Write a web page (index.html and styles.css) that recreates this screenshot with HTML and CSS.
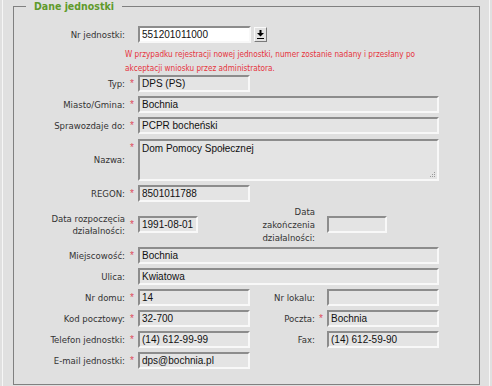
FILE: index.html
```html
<!DOCTYPE html>
<html lang="pl">
<head>
  <meta charset="UTF-8" />
  <title>Dane jednostki</title>
  <link rel="stylesheet" href="styles.css">
</head>
<body>
  <div class="panel">
    <fieldset class="ramka">
      <legend>Dane jednostki</legend>

      <div class="formularz">
        <label class="etykieta">Nr jednostki:</label>
        <span class="gwiazdka"></span>
        <div class="pole-nr">
          <input type="text" class="pole pole-biale" value="551201011000" />
          <button class="przycisk" title="Pobierz">
            <svg width="7" height="9" viewBox="0 0 7 9">
              <rect x="2.5" y="0" width="2" height="3" fill="#000" />
              <polygon points="0,3 7,3 3.5,6.5" fill="#000" />
              <rect x="0" y="8" width="7" height="1" fill="#000" />
            </svg>
          </button>
        </div>

        <p class="uwaga">W przypadku rejestracji nowej jednostki, numer zostanie nadany i przesłany po<br>akceptacji wniosku przez administratora.</p>

        <label class="etykieta">Typ:</label>
        <span class="gwiazdka">*</span>
        <input type="text" class="pole" value="DPS (PS)" disabled />

        <label class="etykieta">Miasto/Gmina:</label>
        <span class="gwiazdka">*</span>
        <input type="text" class="pole szerokie" value="Bochnia" disabled />

        <label class="etykieta">Sprawozdaje do:</label>
        <span class="gwiazdka">*</span>
        <input type="text" class="pole szerokie" value="PCPR bocheński" disabled />

        <label class="etykieta">Nazwa:</label>
        <span class="gwiazdka gora">*</span>
        <div class="obszar-ramka">
          <textarea class="pole obszar" disabled>Dom Pomocy Społecznej</textarea>
          <svg class="uchwyt" width="7" height="7" viewBox="0 0 7 7">
            <rect x="5" y="1" width="1" height="1" fill="#9a9a9a" />
            <rect x="3" y="3" width="1" height="1" fill="#9a9a9a" />
            <rect x="5" y="3" width="1" height="1" fill="#9a9a9a" />
            <rect x="1" y="5" width="1" height="1" fill="#9a9a9a" />
            <rect x="3" y="5" width="1" height="1" fill="#9a9a9a" />
            <rect x="5" y="5" width="1" height="1" fill="#9a9a9a" />
          </svg>
        </div>

        <label class="etykieta">REGON:</label>
        <span class="gwiazdka">*</span>
        <input type="text" class="pole" value="8501011788" disabled />

        <label class="etykieta">Data rozpoczęcia<br>działalności:</label>
        <span class="gwiazdka srodek">*</span>
        <input type="text" class="pole data" value="1991-08-01" disabled />
        <label class="etykieta prawa trzy">Data<br>zakończenia<br>działalności:</label>
        <span class="gwiazdka"></span>
        <input type="text" class="pole data" value="" disabled />

        <label class="etykieta">Miejscowość:</label>
        <span class="gwiazdka">*</span>
        <input type="text" class="pole szerokie" value="Bochnia" disabled />

        <label class="etykieta">Ulica:</label>
        <span class="gwiazdka"></span>
        <input type="text" class="pole szerokie" value="Kwiatowa" disabled />

        <label class="etykieta">Nr domu:</label>
        <span class="gwiazdka">*</span>
        <input type="text" class="pole" value="14" disabled />
        <label class="etykieta prawa">Nr lokalu:</label>
        <span class="gwiazdka"></span>
        <input type="text" class="pole" value="" disabled />

        <label class="etykieta">Kod pocztowy:</label>
        <span class="gwiazdka">*</span>
        <input type="text" class="pole" value="32-700" disabled />
        <label class="etykieta prawa">Poczta:</label>
        <span class="gwiazdka">*</span>
        <input type="text" class="pole" value="Bochnia" disabled />

        <label class="etykieta">Telefon jednostki:</label>
        <span class="gwiazdka">*</span>
        <input type="text" class="pole" value="(14) 612-99-99" disabled />
        <label class="etykieta prawa">Fax:</label>
        <span class="gwiazdka"></span>
        <input type="text" class="pole" value="(14) 612-59-90" disabled />

        <label class="etykieta">E-mail jednostki:</label>
        <span class="gwiazdka">*</span>
        <input type="text" class="pole" value="dps@bochnia.pl" disabled />
      </div>
    </fieldset>
  </div>
</body>
</html>
```

FILE: styles.css
```css
html, body {
  margin: 0;
  height: 100%;
  background-color: #e0e0e0;
}

body {
  font-family: "DejaVu Sans Condensed", "Liberation Sans", sans-serif;
  font-size: 9.5px;
  color: #333;
}

.panel {
  margin: 0 2px;
  height: 100%;
  box-sizing: border-box;
  border-left: 1px solid #f6f6f6;
  border-right: 1px solid #f6f6f6;
  padding: 0 9px 0 10px;
}

.ramka {
  margin: 0;
  padding: 0 0 15px 0;
  border: 1px solid #808080;
  min-width: 0;
}

.ramka legend {
  margin-left: 12px;
  padding: 0 8px;
  font-size: 10.5px;
  line-height: 13px;
  font-weight: bold;
  color: #5f9a2c;
}

.formularz {
  display: grid;
  grid-template-columns: 112px 12px 112px 65px 12px 112px;
  row-gap: 4px;
  align-items: center;
  margin-top: 13px;
}

.etykieta {
  grid-column: 1;
  text-align: right;
  padding-right: 1px;
  line-height: 12px;
  white-space: nowrap;
}

.etykieta.prawa {
  grid-column: 4;
  padding-right: 0;
}

.etykieta.trzy {
  line-height: 13px;
  margin-top: -1px;
  margin-bottom: -1px;
}

.gwiazdka {
  align-self: stretch;
  text-align: center;
  font-family: "Liberation Sans", Arial, sans-serif;
  font-size: 10px;
  line-height: 17px;
  color: #de4b5b;
}

.gwiazdka.gora {
  align-self: start;
  margin-top: 1px;
}

.gwiazdka.srodek {
  align-self: center;
}

.pole {
  box-sizing: border-box;
  width: 112px;
  height: 17px;
  margin: 0;
  padding: 0 2px;
  border: 2px solid;
  border-color: #8c8c8c #f8f8f8 #f8f8f8 #8c8c8c;
  background-color: #e4e4e4;
  font-family: "Liberation Sans", Arial, sans-serif;
  font-size: 10px;
  color: #111;
}

.pole:disabled {
  color: #111;
  -webkit-text-fill-color: #111;
  opacity: 1;
}

.szerokie {
  grid-column: 3 / 7;
  width: 301px;
}

.obszar-ramka {
  grid-column: 3 / 7;
  position: relative;
  margin-top: 1px;
  height: 42px;
}

.obszar {
  display: block;
  width: 301px;
  height: 42px;
  padding: 2px 2px;
  line-height: 12px;
  resize: none;
}

.uchwyt {
  position: absolute;
  right: 3px;
  bottom: 3px;
}

.data {
  width: 60px;
}

.pole-biale {
  background-color: #fff;
  width: 113px;
}

.pole-nr {
  display: flex;
  align-items: center;
  gap: 3px;
  grid-column: 3 / 5;
}

.przycisk {
  box-sizing: border-box;
  width: 13px;
  height: 15px;
  padding: 0;
  margin: 0;
  display: flex;
  align-items: center;
  justify-content: center;
  border: 1px solid;
  border-color: #fafafa #7a7a7a #7a7a7a #fafafa;
  background-color: #e2e2e2;
}

.uwaga {
  grid-column: 1 / 7;
  margin: 0 0 -4px 111px;
  font-size: 8.15px;
  line-height: 14px;
  color: #e6333c;
  white-space: nowrap;
}
```
